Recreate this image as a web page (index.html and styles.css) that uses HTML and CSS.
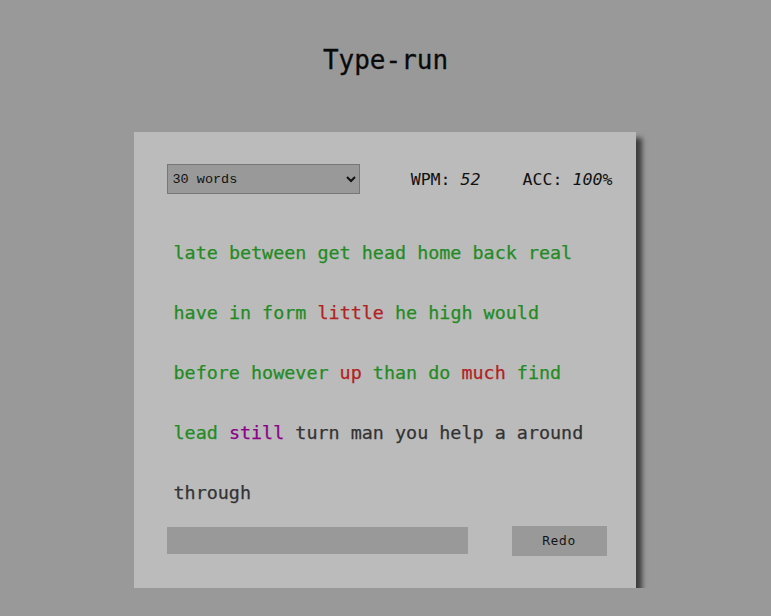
FILE: index.html
```html
<!DOCTYPE html>
<html lang="en">
<head>
<meta charset="utf-8">
<title>Type-run</title>
<link rel="stylesheet" href="styles.css">
</head>
<body>
<h1 class="title">Type-run</h1>
<main class="card">
  <div class="top-row">
    <select class="mode">
      <option>30 words</option>
      <option>60 words</option>
      <option>90 words</option>
    </select>
    <div class="stats">
      <span class="stat">WPM: <em>52</em></span>
      <span class="stat">ACC: <em>100%</em></span>
    </div>
  </div>
  <div class="words">
    <span class="ok">late</span> <span class="ok">between</span> <span class="ok">get</span> <span class="ok">head</span> <span class="ok">home</span> <span class="ok">back</span> <span class="ok">real</span>
    <span class="ok">have</span> <span class="ok">in</span> <span class="ok">form</span> <span class="bad">little</span> <span class="ok">he</span> <span class="ok">high</span> <span class="ok">would</span>
    <span class="ok">before</span> <span class="ok">however</span> <span class="bad">up</span> <span class="ok">than</span> <span class="ok">do</span> <span class="bad">much</span> <span class="ok">find</span>
    <span class="ok">lead</span> <span class="cur">still</span> <span>turn</span> <span>man</span> <span>you</span> <span>help</span> <span>a</span> <span>around</span>
    <span>through</span>
  </div>
  <div class="bottom-row">
    <input class="entry" type="text" aria-label="type here">
    <button class="redo" type="button">Redo</button>
  </div>
</main>
</body>
</html>
```
FILE: styles.css
```css
html, body {
  margin: 0;
  padding: 0;
}
body {
  background: #999999;
  font-family: "DejaVu Sans Mono", monospace;
  color: #111;
}
.title {
  margin: 45px 0 57px;
  font-size: 26px;
  line-height: 30px;
  font-weight: normal;
  text-align: center;
  color: #0a0a0a;
  -webkit-text-stroke: 0.3px currentColor;
}
.card {
  box-sizing: border-box;
  width: 502px;
  margin: 0 auto;
  position: relative;
  left: -1px;
  background: #bbbbbb;
  padding: 32px 23px 32px 33px;
  box-shadow: 6px 6px 5px rgba(0, 0, 0, 0.6);
}
.top-row {
  display: flex;
  align-items: center;
  justify-content: space-between;
}
.mode {
  box-sizing: border-box;
  width: 193px;
  height: 30px;
  background: #999999;
  border: 1px solid #777777;
  border-radius: 0;
  padding: 0 0 0 1px;
  font-family: "Liberation Mono", monospace;
  font-size: 13.5px;
  color: #111;
}
.stats {
  display: flex;
  gap: 42px;
  font-size: 16.6px;
  color: #111;
}
.stat em {
  font-style: italic;
}
.words {
  margin-top: 29px;
  padding: 0 17px 0 7px;
  font-size: 18.4px;
  line-height: 60px;
  color: #333333;
  -webkit-text-stroke: 0.25px currentColor;
}
.ok { color: #228b22; }
.bad { color: #b22222; }
.cur { color: #8b008b; }
.bottom-row {
  display: flex;
  align-items: flex-start;
  gap: 44px;
  margin-top: 3px;
}
.entry {
  box-sizing: border-box;
  width: 301px;
  height: 27px;
  margin-top: 1px;
  border: none;
  background: #999999;
  padding: 0 6px;
}
.redo {
  box-sizing: border-box;
  width: 95px;
  height: 30px;
  border: none;
  background: #999999;
  font-family: "DejaVu Sans", sans-serif;
  font-size: 12px;
  letter-spacing: 1px;
  color: #111;
}
```
